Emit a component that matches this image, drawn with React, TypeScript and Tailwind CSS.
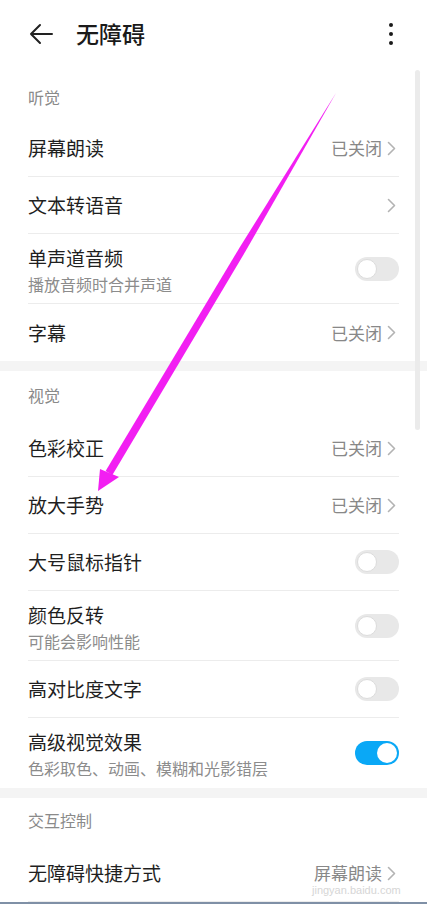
import type { ReactNode } from "react";

type Row = {
  title: string;
  sub?: string;
  value?: string;
  chevron?: boolean;
  toggle?: "on" | "off";
  last?: boolean;
};

const HEARING: Row[] = [
  { title: "屏幕朗读", value: "已关闭", chevron: true },
  { title: "文本转语音", chevron: true },
  { title: "单声道音频", sub: "播放音频时合并声道", toggle: "off" },
  { title: "字幕", value: "已关闭", chevron: true, last: true },
];

const VISION: Row[] = [
  { title: "色彩校正", value: "已关闭", chevron: true },
  { title: "放大手势", value: "已关闭", chevron: true },
  { title: "大号鼠标指针", toggle: "off" },
  { title: "颜色反转", sub: "可能会影响性能", toggle: "off" },
  { title: "高对比度文字", toggle: "off" },
  { title: "高级视觉效果", sub: "色彩取色、动画、模糊和光影错层", toggle: "on", last: true },
];

function Chevron() {
  return (
    <svg width="9" height="15" viewBox="0 0 9 15" className="ml-[5px] mr-[3px]">
      <path d="M1.5 1.5 L7.5 7.5 L1.5 13.5" fill="none" stroke="#b3b3b3" strokeWidth="1.6" strokeLinecap="round" strokeLinejoin="round" />
    </svg>
  );
}

function Toggle({ on }: { on: boolean }) {
  return (
    <div
      className={`relative w-[44px] h-[24px] rounded-full ${on ? "bg-[#0aa8f6]" : "bg-[#e8e8e8]"}`}
    >
      <div
        className={`absolute top-[2px] w-[20px] h-[20px] rounded-full bg-white ${
          on ? "right-[2px]" : "left-[2px] border border-[#dcdcdc]"
        }`}
      />
    </div>
  );
}

function SettingRow({ row }: { row: Row }) {
  const border = row.last ? "" : "border-b border-[#ececec]";
  const right: ReactNode = (
    <div className="flex items-center">
      {row.value && <span className="text-[17px] text-[#888888] leading-[20px]">{row.value}</span>}
      {row.chevron && <Chevron />}
      {row.toggle && <Toggle on={row.toggle === "on"} />}
    </div>
  );

  if (row.sub) {
    return (
      <div className={`h-[70px] flex items-center justify-between ${border}`}>
        <div className="flex flex-col h-full pt-[12px]">
          <span className="text-[19px] leading-[24px] text-[#1f1f1f]">{row.title}</span>
          <span className="mt-[3px] text-[16px] leading-[22px] text-[#8c8c8c]">{row.sub}</span>
        </div>
        {right}
      </div>
    );
  }

  return (
    <div className={`h-[57px] flex items-center justify-between ${border}`}>
      <span className="text-[19px] leading-[24px] text-[#1f1f1f]">{row.title}</span>
      {right}
    </div>
  );
}

function SectionLabel({ text, h, pt }: { text: string; h: string; pt: string }) {
  return (
    <div className={`${h} ${pt} px-[28px]`}>
      <span className="text-[16px] leading-[16px] text-[#8a8a8a]">{text}</span>
    </div>
  );
}

export default function App() {
  return (
    <div
      className="relative w-[427px] h-[904px] overflow-hidden bg-white"
      style={{ fontFamily: '"Noto Sans CJK SC", "Noto Sans", sans-serif' }}
    >
      {/* Header */}
      <div className="h-[70px] flex items-center pl-[29px] pr-[30px] pb-[2px]">
        <svg width="24" height="24" viewBox="0 0 24 24">
          <path d="M2 12 H23 M11 3 L2 12 L11 21" fill="none" stroke="#222" strokeWidth="2" strokeLinecap="round" strokeLinejoin="round" />
        </svg>
        <span className="ml-[23px] text-[23px] leading-[30px] font-medium text-[#1a1a1a] -mt-[2px]">无障碍</span>
        <div className="ml-auto flex flex-col items-center gap-[5px] w-[6px] mr-[3px]">
          <span className="w-[4px] h-[4px] rounded-full bg-[#1a1a1a]" />
          <span className="w-[4px] h-[4px] rounded-full bg-[#1a1a1a]" />
          <span className="w-[4px] h-[4px] rounded-full bg-[#1a1a1a]" />
        </div>
      </div>

      <SectionLabel text="听觉" h="h-[50px]" pt="pt-[15px]" />
      <div className="px-[28px]">
        {HEARING.map((r) => (
          <SettingRow key={r.title} row={r} />
        ))}
      </div>

      <div className="h-[10px] bg-[#f4f4f4]" />

      <SectionLabel text="视觉" h="h-[49px]" pt="pt-[12px]" />
      <div className="px-[28px]">
        {VISION.map((r) => (
          <SettingRow key={r.title} row={r} />
        ))}
      </div>

      <div className="h-[10px] bg-[#f4f4f4]" />

      <SectionLabel text="交互控制" h="h-[47px]" pt="pt-[10px]" />
      <div className="px-[28px]">
        <SettingRow row={{ title: "无障碍快捷方式", value: "屏幕朗读", chevron: true }} />
      </div>
      <div className="h-[2px] bg-[#7f90a6]" />

      {/* Scrollbar */}
      <div className="absolute left-[415px] top-[70px] w-[5px] h-[360px] rounded-full bg-[#ebebeb]" />

      {/* Watermark */}
      <span className="absolute left-[312px] top-[884px] text-[11px] leading-[12px] text-[#d6d6d6]" style={{ fontFamily: '"Liberation Sans", sans-serif' }}>
        jingyan.baidu.com
      </span>

      {/* Annotation arrow */}
      <svg className="absolute inset-0 pointer-events-none" width="427" height="904" viewBox="0 0 427 904">
        <polygon
          points="336,93 245.2,251.8 112.4,475.1 105.6,470.9 239.2,248.2"
          fill="#f21ff2"
        />
        <polygon points="98,491 100,469 119,477" fill="#f21ff2" />
      </svg>
    </div>
  );
}
